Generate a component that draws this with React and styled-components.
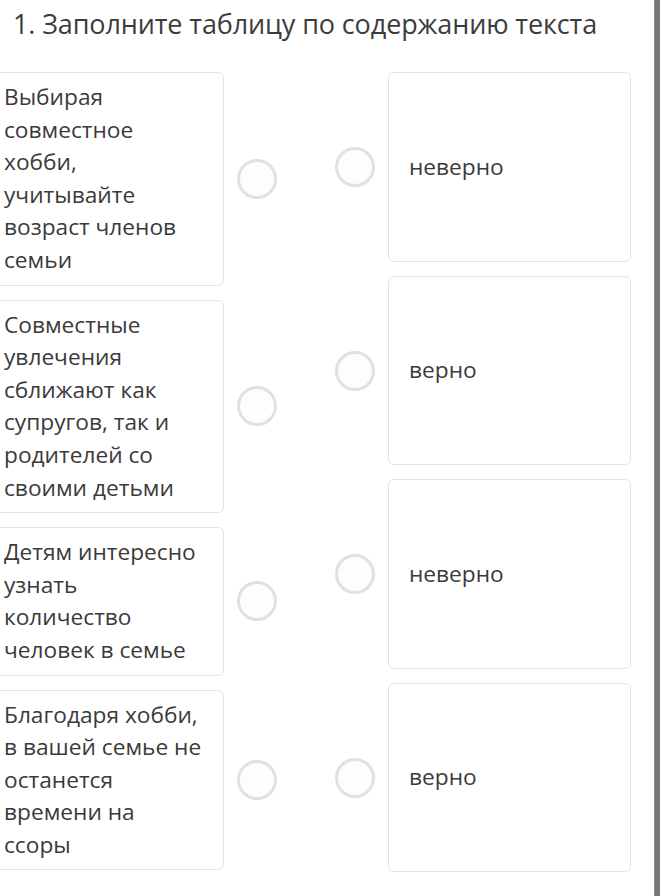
import React from 'react';
import styled, { createGlobalStyle } from 'styled-components';

const GlobalStyle = createGlobalStyle`
  html, body {
    margin: 0;
    padding: 0;
    background: #fff;
  }

  body {
    font-family: "Open Sans", "Noto Sans", sans-serif;
    color: #3a3a3a;
    overflow: hidden;
  }
`;

const Page = styled.div`
  display: flex;
  width: 666px;
  height: 896px;
  background: #fff;
  overflow: hidden;
`;

const Content = styled.div`
  flex: 0 0 654px;
  min-width: 0;
`;

const ScrollBar = styled.div`
  flex: 0 0 6px;
  align-self: stretch;
  background: #777;
  border-left: 1px solid #8a8a8a;
  box-sizing: border-box;
`;

const Title = styled.h1`
  margin: 6px 0 30px 13px;
  font-size: 27px;
  line-height: 36px;
  font-weight: 400;
  letter-spacing: -0.12px;
  color: #3c3c3c;
  white-space: nowrap;
`;

const Columns = styled.div`
  display: flex;
  align-items: flex-start;
  gap: 58px;
  margin-left: -7px;
`;

const Column = styled.div`
  display: flex;
  flex-direction: column;
  gap: 14px;
`;

const Row = styled.div`
  display: flex;
  align-items: center;
  gap: 13px;
`;

const Card = styled.div`
  box-sizing: border-box;
  border: 1.5px solid #e4e4e4;
  border-radius: 6px;
  background: #fff;
  font-size: 22.7px;
  line-height: 32.6px;
  color: #3a3a3a;
`;

const StatementCard = styled(Card)`
  width: 231px;
  padding: 8px 18px 8px 10px;
`;

const AnswerCard = styled(Card)`
  display: flex;
  align-items: center;
  width: 243px;
  height: ${(p) => p.$height}px;
  padding: 0 20px;
`;

const Radio = styled.span`
  box-sizing: border-box;
  flex-shrink: 0;
  width: 40px;
  height: 40px;
  border: 3px solid #dfe2e2;
  border-radius: 50%;
  background: #fdfdfd;
`;

const statements = [
  'Выбирая совместное хобби, учитывайте возраст членов семьи',
  'Совместные увлечения сближают как супругов, так и родителей со своими детьми',
  'Детям интересно узнать количество человек в семье',
  'Благодаря хобби, в вашей семье не останется времени на ссоры',
];

const answers = [
  { text: 'неверно', height: 190 },
  { text: 'верно', height: 189 },
  { text: 'неверно', height: 190 },
  { text: 'верно', height: 189 },
];

export default function App() {
  return (
    <>
      <GlobalStyle />
      <Page>
        <Content>
          <Title>1. Заполните таблицу по содержанию текста</Title>
          <Columns>
            <Column>
              {statements.map((s) => (
                <Row key={s}>
                  <StatementCard>{s}</StatementCard>
                  <Radio />
                </Row>
              ))}
            </Column>
            <Column>
              {answers.map((a, i) => (
                <Row key={i}>
                  <Radio />
                  <AnswerCard $height={a.height}>{a.text}</AnswerCard>
                </Row>
              ))}
            </Column>
          </Columns>
        </Content>
        <ScrollBar />
      </Page>
    </>
  );
}
